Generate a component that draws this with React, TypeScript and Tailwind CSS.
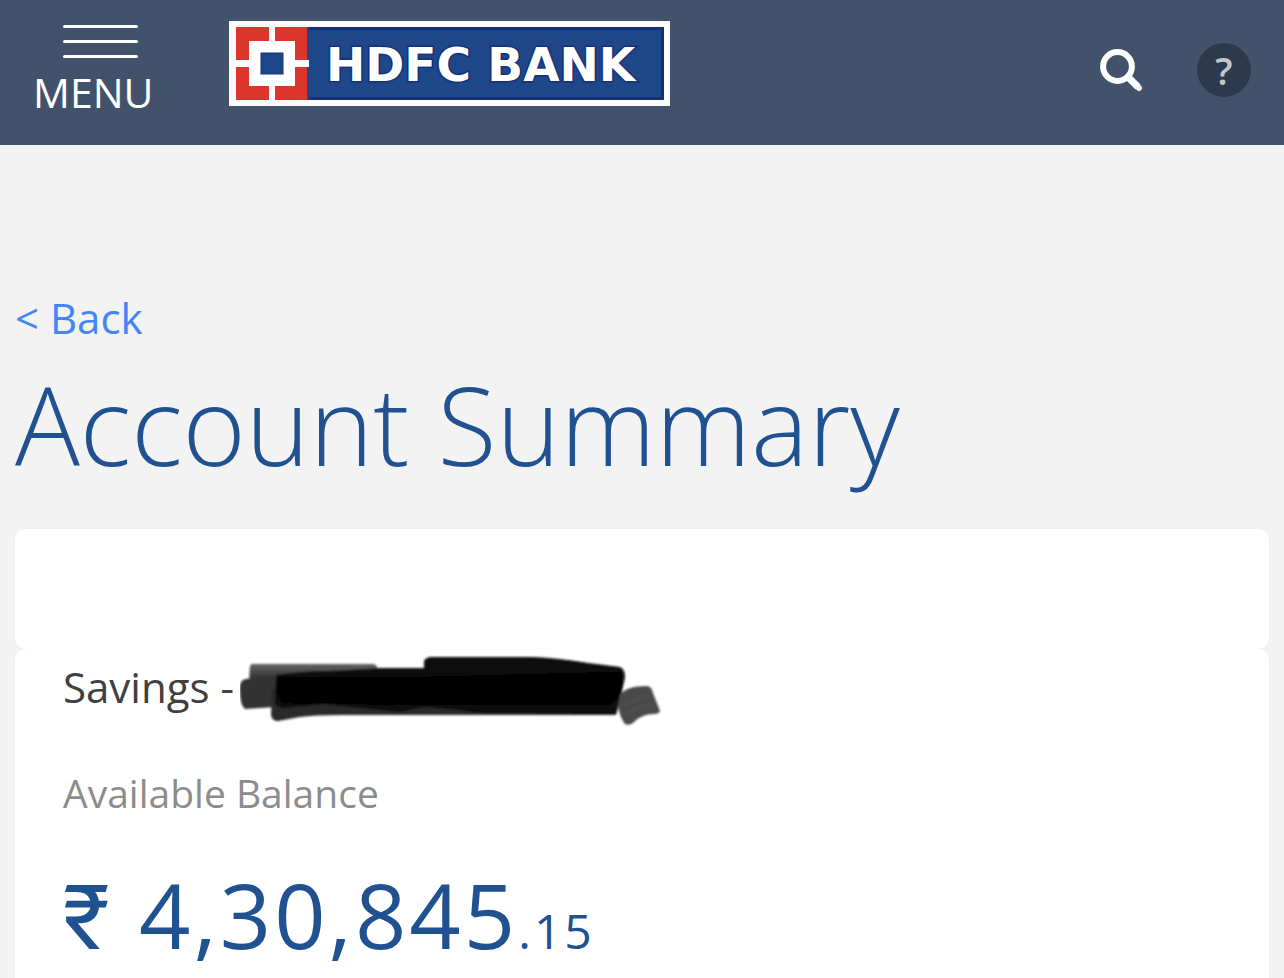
const account = {
  type: "Savings",
  balance: "4,30,845",
  paise: ".15",
};

function MenuButton() {
  return (
    <button type="button" className="flex flex-col items-start text-white">
      <span className="ml-[30px] flex w-[75px] flex-col gap-3">
        <span className="h-[3px] rounded-sm bg-white" />
        <span className="h-[3px] rounded-sm bg-white" />
        <span className="h-[3px] rounded-sm bg-white" />
      </span>
      <span className="mt-[10px] text-[41px] leading-[48px]">MENU</span>
    </button>
  );
}

function BankLogo() {
  return (
    <svg viewBox="0 0 441 85" className="h-[85px] w-[441px]" role="img" aria-label="HDFC Bank">
      <rect width="441" height="85" fill="#fbfbfd" />
      <rect x="7" y="6" width="73" height="73" fill="#dc352b" />
      <rect x="78" y="6" width="357" height="73" fill="#1d4788" />
      <path d="M80 7.5H433.5V77.5H80" fill="none" stroke="#15307a" strokeWidth="3" />
      {/* emblem */}
      <path d="M40 6h6v73h-6z M7 39h73v7H7z M20 20h46v45H20z" fill="#fff" />
      <rect x="32" y="32" width="22" height="21" fill="#1d4788" stroke="#15307a" strokeWidth="1" />
      <text
        x="97"
        y="60"
        fill="#fff"
        stroke="#15307a"
        strokeWidth="3"
        paintOrder="stroke"
        fontFamily="'DejaVu Sans', sans-serif"
        fontWeight="700"
        fontSize="47"
      >
        HDFC BANK
      </text>
    </svg>
  );
}

function SearchIcon() {
  return (
    <svg viewBox="0 0 44 44" className="size-11" fill="none" stroke="#fff" aria-hidden="true">
      <circle cx="18.5" cy="18.5" r="14.4" strokeWidth="6" />
      <path d="M28 28L39 39" strokeWidth="7" />
      <path d="M37 37L40 40" strokeWidth="6" strokeLinecap="round" />
    </svg>
  );
}

// Marker strokes that hide the account number
function RedactedNumber() {
  return (
    <svg viewBox="0 0 424 72" className="h-[72px] w-[424px]" role="img" aria-label="Account number hidden">
      <defs>
        <filter id="marker" x="-5%" y="-10%" width="110%" height="120%">
          <feGaussianBlur stdDeviation="1" />
        </filter>
        <linearGradient id="fade" x1="0" y1="0" x2="0" y2="1">
          <stop offset="0" stopColor="#666" />
          <stop offset="0.4" stopColor="#2a2a2a" />
          <stop offset="1" stopColor="#111" />
        </linearGradient>
      </defs>
      <g filter="url(#marker)">
        <path d="M10 11Q11 8 15 9L134 9Q138 11 138 15V50H12Q8 30 10 11Z" fill="url(#fade)" />
        <path d="M3 25Q8 22 36 24V52L5 54Q0 50 0 36Q-1 28 3 25Z" fill="#303030" />
        <path d="M32 34L379 48L376 60H102Q75 60 60 62L38 66Q32 66 31 60Z" fill="#2b2b2b" />
        <path d="M36 20Q60 16 90 16L140 13H184V6Q186 2 192 2H293Q318 3 348 8L380 12Q387 16 384 27L381 40L376 59L240 58Q210 54 185 52L160 57Q110 52 84 49L44 53Q36 52 35 48Z" fill="#080808" />
        <path d="M37 22H186L380 17Q384 25 381 40L370 50H190L44 48Q36 46 37 22Z" fill="#000" />
        <path d="M380 40Q386 31 407 31Q412 32 413 38L420 56Q419 59 414 59Q401 59 393 68Q389 71 385 69Q379 61 378 50Z" fill="#484848" />
        <path d="M384 51Q394 43 410 41M386 60Q398 50 416 50" fill="none" stroke="#505050" strokeWidth="3" />
      </g>
    </svg>
  );
}

export default function App() {
  return (
    <div className="flex min-h-screen flex-col bg-[#f3f3f3] font-['Open_Sans',sans-serif]">
      <header className="flex h-[145px] shrink-0 items-start bg-[#42526b] px-[33px]">
        <div className="w-[196px] pt-[25px]">
          <MenuButton />
        </div>
        <a href="#home" className="pt-[21px]">
          <BankLogo />
        </a>
        <div className="ml-auto flex items-center gap-[54px] pt-[43px]">
          <button type="button" aria-label="Search">
            <SearchIcon />
          </button>
          <button
            type="button"
            aria-label="Help"
            className="flex size-[54px] items-center justify-center rounded-full bg-[#2d3a4e] text-[38px] leading-[54px] font-semibold text-[#c3c7cd]"
          >
            ?
          </button>
        </div>
      </header>

      <main className="flex flex-1 flex-col px-[15px] pt-[145px]">
        <a href="#back" className="self-start text-[42px] leading-[56px] text-[#4285f8]">
          &lt; Back
        </a>
        <h1 className="mt-[7px] text-[108px] leading-[144px] font-light text-[#205191]">Account Summary</h1>

        <div className="mt-8 h-[120px] rounded-[10px] bg-white shadow-[0_0_2px_rgba(0,0,0,0.06)]" />
        <section className="flex-1 rounded-t-[10px] bg-white px-12 pt-[6px] shadow-[0_0_2px_rgba(0,0,0,0.06)]">
          <div className="flex items-start gap-[6px]">
            <h2 className="text-[42px] leading-[64px] text-[#404040]">{account.type} -</h2>
            <RedactedNumber />
          </div>
          <p className="mt-[39px] text-[39px] leading-[54px] text-[#8c8c8c]">Available Balance</p>
          <p className="mt-[34px] text-[90px] leading-[120px] tracking-[3px] text-[#205191]">
            <span className="font-[Roboto]">₹</span> {account.balance}
            <span className="text-[48px]">{account.paise}</span>
          </p>
        </section>
      </main>
    </div>
  );
}
